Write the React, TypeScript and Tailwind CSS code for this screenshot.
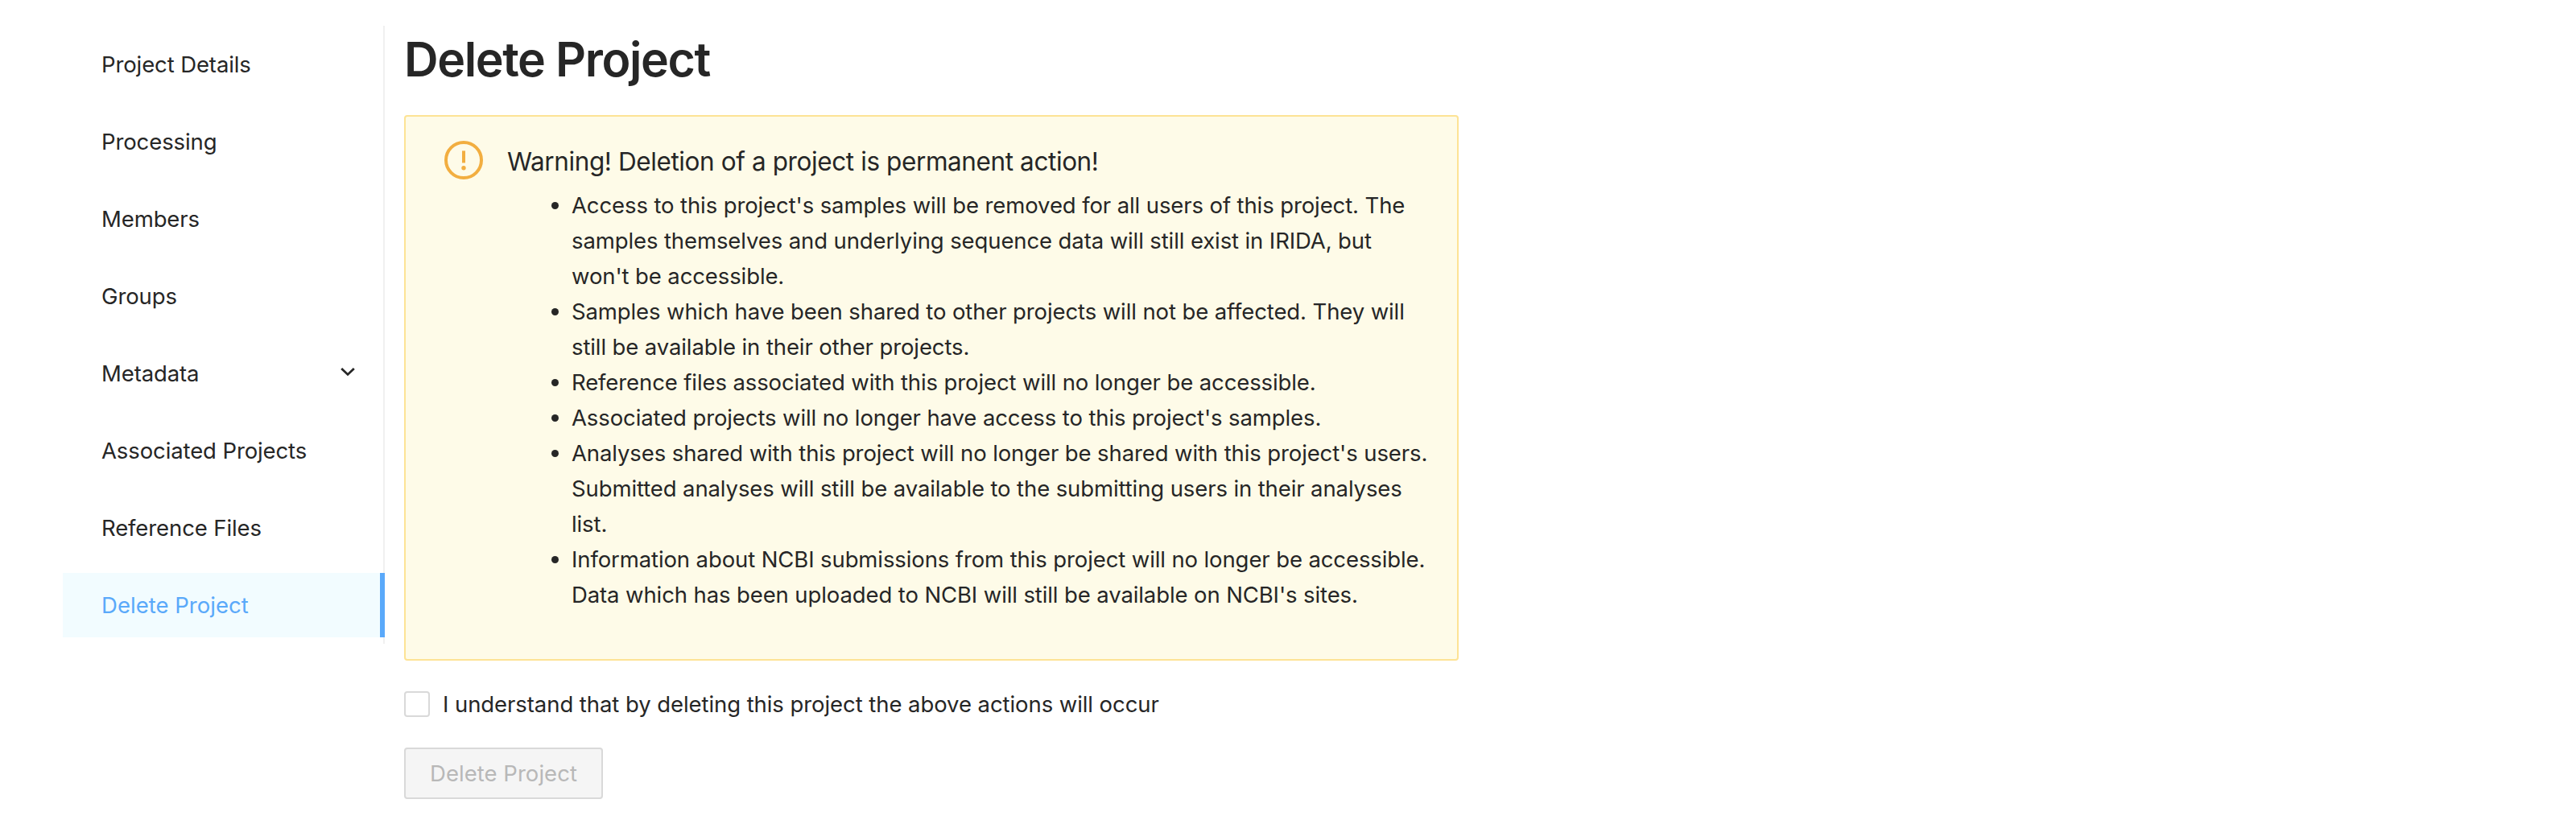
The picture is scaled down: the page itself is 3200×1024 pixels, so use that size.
const navItems = [
  { label: "Project Details" },
  { label: "Processing" },
  { label: "Members" },
  { label: "Groups" },
  { label: "Metadata", expandable: true },
  { label: "Associated Projects" },
  { label: "Reference Files" },
  { label: "Delete Project", active: true },
];

const consequences = [
  [
    "Access to this project's samples will be removed for all users of this project. The",
    "samples themselves and underlying sequence data will still exist in IRIDA, but",
    "won't be accessible.",
  ],
  [
    "Samples which have been shared to other projects will not be affected. They will",
    "still be available in their other projects.",
  ],
  ["Reference files associated with this project will no longer be accessible."],
  ["Associated projects will no longer have access to this project's samples."],
  [
    "Analyses shared with this project will no longer be shared with this project's users.",
    "Submitted analyses will still be available to the submitting users in their analyses",
    "list.",
  ],
  [
    "Information about NCBI submissions from this project will no longer be accessible.",
    "Data which has been uploaded to NCBI will still be available on NCBI's sites.",
  ],
];

function Sidebar() {
  return (
    <nav className="mt-8 ml-[78px] flex h-[768px] w-[400px] shrink-0 flex-col gap-4 border-r-2 border-[#f0f0f0] pt-2">
      {navItems.map((item) => (
        <a
          key={item.label}
          className={
            item.active
              ? "-mr-0.5 flex h-20 shrink-0 items-center border-r-[6px] border-[#5aa9fa] bg-[#f2fcff] pl-12 tracking-[0.03px] text-[#5aa9fa]"
              : "flex h-20 shrink-0 items-center justify-between pr-[35px] pl-12"
          }
        >
          <span>{item.label}</span>
          {item.expandable && (
            <svg className="-mt-1 h-3 w-[18px]" viewBox="0 0 18 12" fill="none">
              <path d="M1.2 2 9 9.4 16.8 2" stroke="#262626" strokeWidth="2.8" />
            </svg>
          )}
        </a>
      ))}
    </nav>
  );
}

function WarningAlert() {
  return (
    <section className="mt-[31px] flex h-[678px] w-[1310px] rounded-[4px] border-2 border-[#fde395] bg-[#fefbe8] pt-[29.5px] pl-12">
      <svg className="h-12 w-12 shrink-0" viewBox="0 0 48 48" fill="none">
        <circle cx="24" cy="24" r="22" stroke="#f2ae40" strokeWidth="4" />
        <path d="M22 12.4h4v15h-4z" fill="#f2ae40" />
        <circle cx="24" cy="33.7" r="2.7" fill="#f2ae40" />
      </svg>
      <div className="ml-[30px]">
        <h2 className="mt-[2.5px] h-[56px] text-[31.5px] leading-[48px] tracking-[-0.4px]">
          Warning! Deletion of a project is permanent action!
        </h2>
        <ul className="pl-20">
          {consequences.map((lines) => (
            <li key={lines[0]} className="flex">
              <span className="mt-[18px] -ml-[25px] mr-4 h-[9px] w-[9px] shrink-0 rounded-full bg-[#262626]" />
              <div>
                {lines.map((line) => (
                  <p key={line} className="whitespace-nowrap">
                    {line}
                  </p>
                ))}
              </div>
            </li>
          ))}
        </ul>
      </div>
    </section>
  );
}

export default function App() {
  return (
    <div className="flex h-[1024px] w-[3200px] overflow-hidden bg-white font-[Inter,sans-serif] text-[27.5px] leading-[44px] tracking-[-0.11px] text-[#262626]">
      <Sidebar />
      <main className="ml-6 pt-[34px]">
        <h1 className="h-[78px] text-[59px] leading-[80px] font-semibold tracking-[-1.4px]">
          Delete Project
        </h1>
        <WarningAlert />
        <label className="mt-[32px] flex h-[44px] items-center gap-4 tracking-[-0.07px]">
          <span className="h-8 w-8 rounded-[4px] border-2 border-[#d9d9d9] bg-white" />
          <span>I understand that by deleting this project the above actions will occur</span>
        </label>
        <button
          disabled
          className="mt-[32px] flex h-16 w-[247px] items-center justify-center rounded-[4px] border-2 border-[#d9d9d9] bg-[#f5f5f5] tracking-[0.03px] text-[#b8b8b8]"
        >
          Delete Project
        </button>
      </main>
    </div>
  );
}
